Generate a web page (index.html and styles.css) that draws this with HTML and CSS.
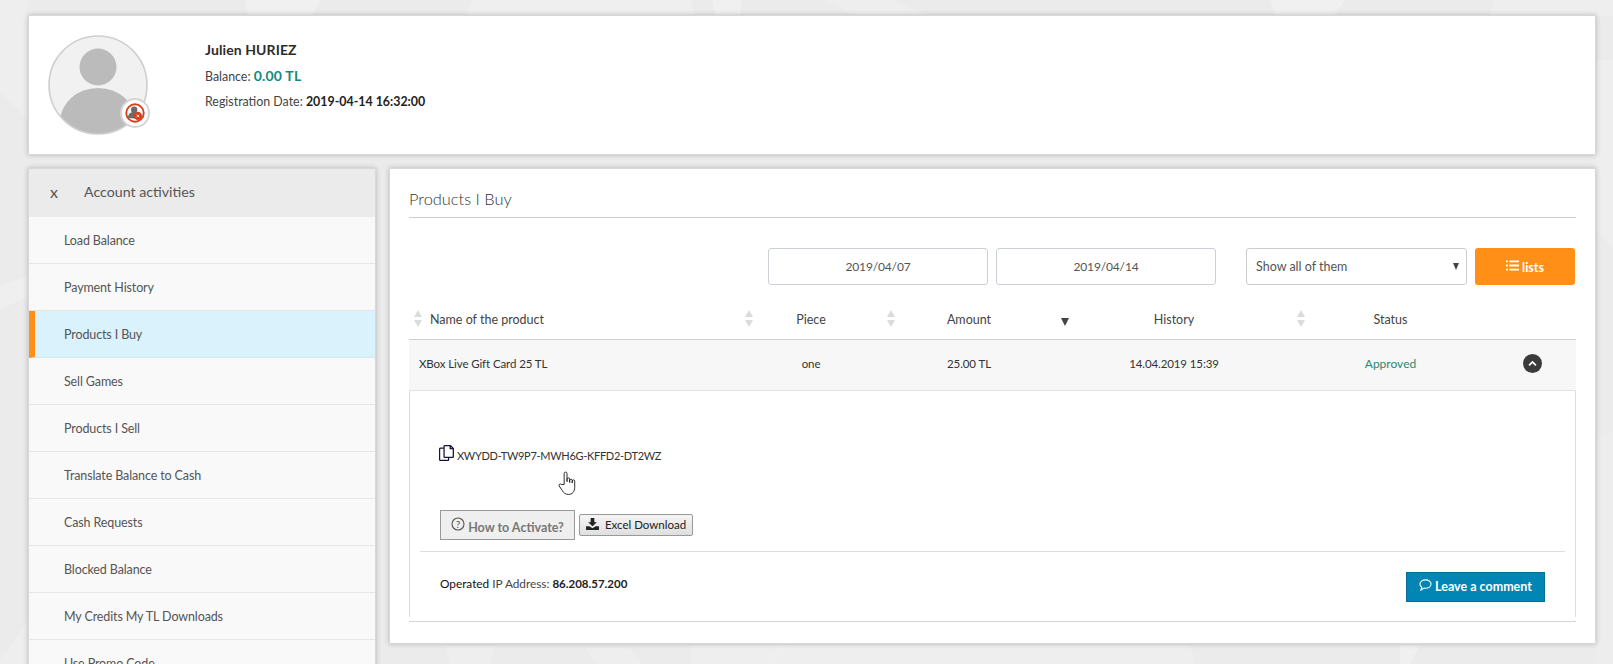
FILE: index.html
```html
<!DOCTYPE html>
<html lang="en">
<head>
<meta charset="utf-8">
<title>Products I Buy</title>
<link rel="stylesheet" href="styles.css">
</head>
<body>
<svg class="backdrop" viewBox="0 0 1613 664" preserveAspectRatio="none" aria-hidden="true">
  <polygon points="245,0 320,0 311,16 248,16" fill="#f0f0f0"/>
  <polygon points="472,0 692,0 694,16 466,16" fill="#efefef"/>
  <polygon points="712,0 742,0 740,16 716,16" fill="#f0f0f0"/>
  <polygon points="825,0 892,0 930,16 855,16" fill="#eeeeee"/>
  <polygon points="1270,0 1345,0 1333,16 1276,16" fill="#f0f0f0"/>
  <polygon points="1495,0 1613,0 1613,16 1489,16" fill="#eeeeee"/>
  <polygon points="0,0 28,0 28,120 0,92" fill="#eeeeee"/>
  <polygon points="0,285 28,276 28,296 0,310" fill="#efefef"/>
  <polygon points="0,660 28,620 28,664 0,664" fill="#eeeeee"/>
  <polygon points="1596,60 1613,60 1613,250 1596,230" fill="#eeeeee"/>
  <polygon points="1596,440 1613,432 1613,664 1596,664" fill="#ededed"/>
  <polygon points="585,648 630,648 643,664 596,664" fill="#eeeeee"/>
  <polygon points="445,646 495,646 490,664 450,664" fill="#eeeeee"/>
  <polygon points="690,645 790,645 775,664 690,664" fill="#eeeeee"/>
  <polygon points="780,645 1190,645 1195,664 760,664" fill="#efefef" opacity=".7"/>
  <polygon points="1400,645 1420,645 1410,664 1400,664" fill="#f0f0f0"/>
</svg>
<div class="page">
  <section class="profile card">
    <div class="avatar">
      <svg class="avatar-art" viewBox="0 0 100 100" aria-hidden="true">
        <defs><clipPath id="avatarClip"><circle cx="50" cy="50" r="48.5"/></clipPath></defs>
        <circle cx="50" cy="50" r="49" fill="#f1f1f1" stroke="#cfcfcf" stroke-width="1.6"/>
        <g clip-path="url(#avatarClip)">
          <circle cx="50" cy="32" r="18.500" fill="#bbbbbb"/>
          <ellipse cx="50" cy="87" rx="38" ry="34" fill="#bbbbbb"/>
        </g>
      </svg>
      <span class="badge">
        <svg viewBox="0 0 24 24" aria-hidden="true">
          <circle cx="12" cy="12" r="10.500" fill="#fff" stroke="#d8401b" stroke-width="2.200"/>
          <circle cx="11" cy="8" r="3.800" fill="#6b6b6b"/>
          <path d="M3.500 18c0-5 3.500-7.500 7.500-7.500s5 1.500 6 4l-3 4.500z" fill="#6b6b6b"/>
          <circle cx="15.500" cy="15.500" r="5" fill="#d8401b"/>
          <path d="M14 14l3 3m0-3l-3 3" stroke="#fff" stroke-width="1"/>
        </svg>
      </span>
    </div>
    <div class="who">
      <div class="who-name">Julien HURIEZ</div>
      <div class="who-line">Balance: <span class="who-money">0.00 TL</span></div>
      <div class="who-line">Registration Date: <b class="who-date">2019-04-14 16:32:00</b></div>
    </div>
  </section>

  <div class="columns">
    <nav class="side card">
      <div class="side-head"><span class="side-x">x</span><span>Account activities</span></div>
      <a class="side-item">Load Balance</a>
      <a class="side-item">Payment History</a>
      <a class="side-item is-active">Products I Buy</a>
      <a class="side-item">Sell Games</a>
      <a class="side-item">Products I Sell</a>
      <a class="side-item">Translate Balance to Cash</a>
      <a class="side-item">Cash Requests</a>
      <a class="side-item">Blocked Balance</a>
      <a class="side-item">My Credits My TL Downloads</a>
      <a class="side-item">Use Promo Code</a>
    </nav>

    <main class="main card">
      <h1 class="main-title">Products I Buy</h1>
      <form class="filters">
        <div class="field field-date">2019/04/07</div>
        <div class="field field-date">2019/04/14</div>
        <div class="field field-select">Show all of them<span class="select-caret"></span></div>
        <button class="btn-list" type="button">
          <svg viewBox="0 0 14 11" aria-hidden="true"><path d="M0 0h2v2H0zM3.500 0H14v2H3.500zM0 4.500h2v2H0zM3.500 4.500H14v2H3.500zM0 9h2v2H0zM3.500 9H14v2H3.500z" fill="#fff"/></svg>
          <span class="btn-list-text">lists</span>
        </button>
      </form>

      <table class="orders">
        <colgroup>
          <col class="c-name"><col class="c-piece"><col class="c-amount"><col class="c-hist"><col class="c-status"><col class="c-act">
        </colgroup>
        <thead>
          <tr>
            <th class="th-name"><span class="sort"></span>Name of the product</th>
            <th><span class="sort"></span>Piece</th>
            <th><span class="sort"></span>Amount</th>
            <th><span class="sort-down"></span>History</th>
            <th><span class="sort"></span>Status</th>
            <th></th>
          </tr>
        </thead>
        <tbody>
          <tr class="row">
            <td class="td-name">XBox Live Gift Card 25 TL</td>
            <td>one</td>
            <td>25.00 TL</td>
            <td>14.04.2019 15:39</td>
            <td class="approved">Approved</td>
            <td>
              <span class="toggle"><svg viewBox="0 0 10 7" aria-hidden="true"><path d="M1.200 5.500L5 1.800l3.800 3.700" fill="none" stroke="#fff" stroke-width="2"/></svg></span>
            </td>
          </tr>
        </tbody>
      </table>

      <section class="detail">
        <div class="code">
          <svg class="code-icon" viewBox="0 0 14 15" aria-hidden="true">
            <path d="M4.500 3H1.500a1 1 0 0 0-1 1v9.500a1 1 0 0 0 1 1h6.500a1 1 0 0 0 1-1V12" fill="none" stroke="#14143a" stroke-width="1.200"/>
            <path d="M5.500.6h5.200l2.700 2.700v7.600a.8.8 0 0 1-.8.8H5.500a.8.8 0 0 1-.8-.8V1.400a.8.8 0 0 1 .8-.8zM10.500.8v2.700h2.800" fill="#fff" stroke="#14143a" stroke-width="1.200"/>
          </svg>
          <span class="code-text">XWYDD-TW9P7-MWH6G-KFFD2-DT2WZ</span>
          <svg class="hand" viewBox="0 0 20 26" aria-hidden="true">
            <path d="M6.500 14V2.500a1.500 1.500 0 0 1 3 0V11V8.500a1.400 1.400 0 0 1 2.800 0V12V9.500a1.400 1.400 0 0 1 2.700 0V12.500V10.500a1.300 1.300 0 0 1 2.600 0V17c0 4.500-2.500 7.500-6.500 7.500-3.500 0-5-1.500-6.500-4L1.200 15.500c-.8-1.500 1-2.800 2.300-1.500z" fill="#fff" stroke="#222" stroke-width="1" stroke-linejoin="round"/>
          </svg>
        </div>
        <div class="actions">
          <button class="btn-how" type="button">
            <svg viewBox="0 0 14 14" aria-hidden="true"><circle cx="7" cy="7" r="6" fill="none" stroke="#555" stroke-width="1.100"/><text x="7" y="10.500" text-anchor="middle" class="how-q">?</text></svg>
            <span class="btn-how-text">How to Activate?</span>
          </button>
          <button class="btn-excel" type="button">
            <svg viewBox="0 0 14 13" aria-hidden="true"><path d="M5 0h4v4.500h2.800L7 9 2.200 4.500H5zM0 9h3.500L7 11l3.500-2H14v4H0z" fill="#222"/></svg>
            Excel Download
          </button>
        </div>
        <div class="foot">
          <div class="ip"><span class="ip-lead">Operated</span> IP Address: <b>86.208.57.200</b></div>
          <button class="btn-comment" type="button">
            <svg viewBox="0 0 14 13" aria-hidden="true"><path d="M7 1C3.500 1 1 3 1 5.500c0 1.500.8 2.700 2 3.500L2 12l3.500-2.200c.5.100 1 .2 1.500.2 3.500 0 6-2 6-4.500S10.500 1 7 1z" fill="none" stroke="#fff" stroke-width="1.200"/></svg>
            Leave a comment
          </button>
        </div>
      </section>
    </main>
  </div>
</div>
</body>
</html>
```
FILE: styles.css
```css
* { box-sizing: border-box; }
html, body { margin: 0; height: 664px; overflow: hidden; }
body {
  background: #ebebeb;
  font-family: Lato, "Open Sans", sans-serif;
  font-size: 13px;
  color: #444;
  position: relative;
}
.backdrop { position: absolute; inset: 0; width: 100%; height: 100%; }
.page {
  position: relative;
  padding: 15px 17px 0 28px;
  display: flex;
  flex-direction: column;
  gap: 13px;
}
.card {
  background: #fff;
  border: 1px solid #d8d8d8;
  box-shadow: 0 0 5px rgba(0, 0, 0, .22);
}

/* Profile */
.profile {
  height: 140px;
  display: flex;
  align-items: flex-start;
  padding: 19px 19px;
}
.avatar { width: 100px; height: 100px; position: relative; flex: none; }
.avatar-art { width: 100px; height: 100px; display: block; }
.badge {
  position: absolute;
  right: -2px;
  bottom: 7px;
  width: 30px;
  height: 30px;
  padding: 3px;
  border-radius: 50%;
  background: #fff;
  border: 2px solid #d5d5d5;
  display: flex;
}
.badge svg { width: 100%; height: 100%; }
.who { margin-left: 57px; padding-top: 5px; }
.who-name { font-size: 14px; font-weight: 700; color: #2c2c2c; line-height: 20px; letter-spacing: .1px; }
.who-line { font-size: 12.400px; color: #444; line-height: 18px; margin-top: 7px; }
.who-money { font-size: 14px; font-weight: 700; color: #128a80; letter-spacing: .2px; }
.who-date { color: #222; font-weight: 700; }

/* Columns */
.columns { display: flex; align-items: flex-start; gap: 13px; }

/* Sidebar */
.side { width: 348px; flex: none; background: #f9f9f9; overflow: hidden; }
.side-head {
  height: 48px;
  background: #ebebeb;
  display: flex;
  align-items: center;
  font-size: 14.200px;
  color: #555;
  padding: 0 0 3px 21px;
}
.side-x { width: 34px; font-size: 16px; margin-top: -1px; }
.side-item {
  display: flex;
  align-items: center;
  height: 47px;
  padding-left: 35px;
  font-size: 12.500px;
  letter-spacing: -.12px;
  color: #555;
  border-bottom: 1px solid #e6e6e6;
}
.side-item.is-active {
  background: #d9f2fc;
  border-left: 6px solid #ff8f17;
  padding-left: 29px;
  border-bottom-color: #d3e8f0;
}

/* Main */
.main { flex: 1; height: 476px; padding: 0 19px; }
.main-title {
  margin: 0;
  height: 49px;
  padding-top: 19px;
  font-size: 16.400px;
  font-weight: 300;
  line-height: 22px;
  color: #333;
  border-bottom: 1px solid #cfcfcf;
}
.filters {
  display: flex;
  margin-top: 30px;
  height: 37px;
  padding-left: 359px;
}
.field {
  border: 1px solid #cbd0d6;
  border-radius: 3px;
  display: flex;
  align-items: center;
  background: #fff;
  color: #555;
  font-size: 12.500px;
}
.field-date {
  width: 220px;
  justify-content: center;
  margin-right: 8px;
  font-size: 12px;
  letter-spacing: -.15px;
}
.field-date + .field-date { margin-right: 30px; }
.field-select { width: 221px; padding-left: 9px; position: relative; margin-right: 8px; border-color: #cccccc; }
.select-caret {
  position: absolute;
  right: 7px;
  top: 14px;
  border: 3.500px solid transparent;
  border-top: 7px solid #444;
  border-bottom: 0;
}
.btn-list {
  width: 100px;
  border: 0;
  border-radius: 3px;
  background: #ff8f17;
  color: #fff;
  font: 700 12.500px Lato, sans-serif;
  padding: 0;
  display: flex;
  align-items: center;
  justify-content: center;
  gap: 3px;
}
.btn-list svg { width: 13px; height: 11px; margin-top: -3px; }
.btn-list-text { margin-top: 2px; }

/* Table */
.orders { width: 1167px; border-collapse: collapse; table-layout: fixed; margin-top: 17px; }
.c-name { width: 331px; }
.c-piece { width: 142px; }
.c-amount { width: 174px; }
.c-hist { width: 236px; }
.c-status { width: 197px; }
.c-act { width: 87px; }
.orders th {
  height: 37px;
  font-size: 12.500px;
  font-weight: 400;
  color: #444;
  text-align: center;
  position: relative;
  border-bottom: 1px solid #cfcfcf;
  padding: 0 0 2px;
}
.orders .th-name { text-align: left; padding-left: 21px; }
.sort, .sort-down {
  position: absolute;
  left: 5px;
  top: 8px;
  width: 8px;
  height: 17px;
}
.sort::before, .sort::after {
  content: "";
  position: absolute;
  left: 0;
  border-left: 4px solid transparent;
  border-right: 4px solid transparent;
}
.sort::before { top: 0; border-bottom: 7px solid #dcdcdc; }
.sort::after { bottom: 0; border-top: 7px solid #dcdcdc; }
.sort-down::after {
  content: "";
  position: absolute;
  left: 0;
  top: 8px;
  border-left: 4.500px solid transparent;
  border-right: 4.500px solid transparent;
  border-top: 8px solid #444;
}
.row { background: #f7f7f7; }
.row td {
  height: 51px;
  text-align: center;
  font-size: 11.500px;
  letter-spacing: -.1px;
  color: #333;
  padding: 0 0 2px;
  border-bottom: 1px solid #e2e2e2;
}
.orders .td-name { text-align: left; padding-left: 10px; }
.orders .approved { color: #27896f; font-size: 12px; letter-spacing: 0; }
.toggle {
  display: inline-flex;
  width: 19px;
  height: 19px;
  border-radius: 50%;
  background: #3b3b3b;
  align-items: center;
  justify-content: center;
  vertical-align: middle;
}
.toggle svg { width: 9px; height: 7px; }

/* Detail */
.detail {
  height: 226px;
  border-left: 1px solid #dcdcdc;
  border-right: 1px solid #dcdcdc;
  position: relative;
  padding: 57px 10px 0;
  box-shadow: 0 4px 0 0 #fff, 0 5px 0 0 #d4d4d4;
}
.code {
  display: flex;
  align-items: center;
  gap: 3px;
  padding-left: 20px;
  height: 15px;
  position: relative;
}
.code-text { font-size: 11px; letter-spacing: -.3px; color: #333; }
.code-icon { width: 15px; height: 16px; margin-top: -4px; margin-left: -1px; }
.hand { position: absolute; left: 138px; top: 23px; width: 19px; height: 25px; }
.actions {
  display: flex;
  align-items: center;
  gap: 4px;
  margin: 47px 0 0 20px;
  height: 30px;
}
.btn-how {
  width: 135px;
  height: 30px;
  border: 1px solid #999;
  background: #efefef;
  color: #777;
  font: 700 12.500px Lato, sans-serif;
  padding: 0;
  display: flex;
  align-items: center;
  justify-content: center;
  gap: 3px;
}
.btn-how svg { width: 14px; height: 14px; margin-top: -1px; }
.btn-how-text { margin-top: 5px; }
.how-q { font: 10px Lato, sans-serif; fill: #555; }
.btn-excel {
  width: 114px;
  height: 22px;
  border: 1px solid #999;
  border-radius: 2px;
  background: linear-gradient(#f5f5f5, #dfdfdf);
  color: #222;
  font: 400 11.500px Lato, sans-serif;
  padding: 0 0 1px;
  display: flex;
  align-items: center;
  justify-content: center;
  gap: 6px;
}
.btn-excel svg { width: 13px; height: 12px; }
.foot {
  margin-top: 11px;
  border-top: 1px solid #dedede;
  padding: 20px 20px 0;
  display: flex;
  justify-content: space-between;
  align-items: flex-start;
}
.ip { font-size: 11.800px; color: #444; line-height: 24px; }
.ip-lead { color: #111; }
.ip b { color: #222; font-size: 11.500px; }
.btn-comment {
  width: 139px;
  height: 30px;
  border: 1px solid #0a6f95;
  background: #0085b4;
  color: #fff;
  font: 700 12.500px Lato, sans-serif;
  padding: 0;
  display: flex;
  align-items: center;
  justify-content: center;
  gap: 3px;
}
.btn-comment svg { width: 13px; height: 12px; margin-top: -3px; }
```
